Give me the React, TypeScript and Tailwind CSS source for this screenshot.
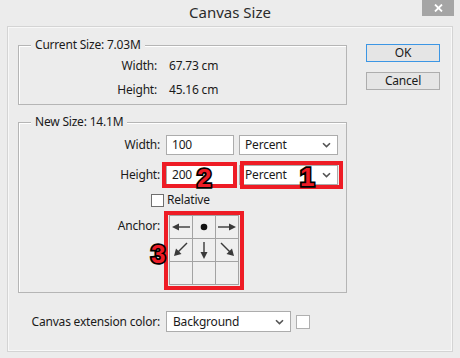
import React from 'react';

// Small chevron used by the dropdowns
function Chevron() {
    return (
        <svg width="9" height="6" viewBox="0 0 9 6" className="shrink-0">
            <path d="M1 1.2 L4.5 4.6 L8 1.2" fill="none" stroke="#555" strokeWidth="1.6" />
        </svg>
    );
}

function Select({ value, width }: { value: string; width: string }) {
    return (
        <div className={`${width} h-[20px] bg-white border border-[#acacac] flex items-center justify-between pl-[5px] pr-[6px]`}>
            <span>{value}</span>
            <Chevron />
        </div>
    );
}

// Big red number used as an annotation over the dialog
function Marker({ n, className }: { n: string; className: string }) {
    return (
        <span
            className={`absolute pointer-events-none text-[26px] leading-none font-black tracking-normal text-[#ee1c25] [-webkit-text-stroke:3.5px_#000] [paint-order:stroke_fill] ${className}`}
            style={{ fontFamily: '"Liberation Sans", Arial, sans-serif' }}
        >
            {n}
        </span>
    );
}

// Anchor arrows, one per cell (null = empty)
const arrows: (React.ReactNode | null)[] = [
    <g key="l">
        <line x1="8" y1="11" x2="20" y2="11" stroke="#3a3a3a" strokeWidth="1.4" />
        <path d="M2 11 L9 7.5 L9 14.5 Z" fill="#3a3a3a" />
    </g>,
    <circle key="c" cx="11" cy="11" r="3.3" fill="#111" />,
    <g key="r">
        <line x1="2" y1="11" x2="14" y2="11" stroke="#3a3a3a" strokeWidth="1.4" />
        <path d="M20 11 L13 7.5 L13 14.5 Z" fill="#3a3a3a" />
    </g>,
    <g key="dl">
        <line x1="17" y1="4" x2="8" y2="13" stroke="#3a3a3a" strokeWidth="1.4" />
        <path d="M4 17 L6 9.5 L11.5 15 Z" fill="#3a3a3a" />
    </g>,
    <g key="d">
        <line x1="11" y1="3" x2="11" y2="14" stroke="#3a3a3a" strokeWidth="1.4" />
        <path d="M11 20 L7.5 13 L14.5 13 Z" fill="#3a3a3a" />
    </g>,
    <g key="dr">
        <line x1="5" y1="4" x2="14" y2="13" stroke="#3a3a3a" strokeWidth="1.4" />
        <path d="M18 17 L16 9.5 L10.5 15 Z" fill="#3a3a3a" />
    </g>,
    null,
    null,
    null
];

export default function App() {
    return (
        <div
            className="w-[460px] h-[358px] bg-[#ececec] text-[12px] leading-[16px] tracking-[-0.2px] text-[#1a1a1a] overflow-hidden"
            style={{ fontFamily: '"Segoe UI", "Noto Sans", sans-serif' }}
        >
            {/* Title bar */}
            <div className="relative h-[26px] flex items-center justify-center">
                <span className="text-[15px] tracking-normal text-[#2b2b2b] -mt-[2px]">Canvas Size</span>
                <div className="absolute top-0 right-[6px] w-[32px] h-[16px] bg-[#a5a5a5] flex items-center justify-center">
                    <svg width="9" height="8" viewBox="0 0 9 8">
                        <path d="M1 0.5 L8 7.5 M8 0.5 L1 7.5" stroke="#fff" strokeWidth="1.8" />
                    </svg>
                </div>
            </div>

            {/* Main panel */}
            <div className="mx-[7px] h-[326px] border border-[#d4d4d4] shadow-[inset_0_0_0_1px_#f8f8f8] pl-[10px] pt-[18px]">
                <div className="flex">
                    <div className="w-[329px]">
                        {/* Current size */}
                        <div className="relative border border-[#b5b5b5] shadow-[inset_1px_1px_0_#fff] pt-[10px] pb-[4px]">
                            <span className="absolute -top-[9px] left-[12px] bg-[#ececec] px-[4px]">Current Size: 7.03M</span>
                            <div className="flex items-center h-[20px]">
                                <span className="w-[138px] text-right">Width:</span>
                                <span className="ml-[12px]">67.73 cm</span>
                            </div>
                            <div className="flex items-center h-[20px] mt-[4px]">
                                <span className="w-[138px] text-right">Height:</span>
                                <span className="ml-[12px]">45.16 cm</span>
                            </div>
                        </div>

                        {/* New size */}
                        <div className="relative mt-[17px] border border-[#b5b5b5] shadow-[inset_1px_1px_0_#fff] pt-[12px] pb-[7px]">
                            <span className="absolute -top-[9px] left-[12px] bg-[#ececec] px-[4px]">New Size: 14.1M</span>
                            <div className="flex items-center h-[20px]">
                                <span className="w-[141px] text-right">Width:</span>
                                <div className="ml-[6px] w-[68px] h-[20px] bg-white border border-[#acacac] flex items-center pl-[5px]">100</div>
                                <div className="ml-[5px]">
                                    <Select value="Percent" width="w-[99px]" />
                                </div>
                            </div>
                            <div className="flex items-center h-[20px] mt-[10px]">
                                <span className="w-[141px] text-right">Height:</span>
                                <div className="relative ml-[6px] w-[68px] h-[20px] bg-white border border-[#acacac] flex items-center pl-[5px]">
                                    200
                                    <span className="absolute -left-[5px] -right-[4px] -top-[4px] -bottom-[4px] border-[4px] border-[#ee1c25] pointer-events-none" />
                                    <Marker n="2" className="left-[30px] -top-[1px]" />
                                </div>
                                <div className="relative ml-[5px]">
                                    <Select value="Percent" width="w-[99px]" />
                                    <span className="absolute left-[1px] -right-[5px] -top-[4px] -bottom-[4px] border-[4px] border-[#ee1c25] pointer-events-none" />
                                    <Marker n="1" className="left-[61px] -top-[1px]" />
                                </div>
                            </div>
                            <div className="flex items-center h-[14px] mt-[8px] pl-[132px]">
                                <div className="w-[13px] h-[13px] bg-white border border-[#6f6f6f]" />
                                <span className="ml-[3px]">Relative</span>
                            </div>
                            <div className="flex items-start mt-[8px]">
                                <span className="w-[141px] text-right mt-[3px]">Anchor:</span>
                                <div className="relative ml-[9px]">
                                    <div className="grid grid-cols-3 gap-px bg-[#a3a3a3] border border-[#a3a3a3]">
                                        {arrows.map((a, i) => (
                                            <div key={i} className="w-[22px] h-[22px] bg-[#efefef]">
                                                {a && (
                                                    <svg width="22" height="22" viewBox="0 0 22 22">
                                                        {a}
                                                    </svg>
                                                )}
                                            </div>
                                        ))}
                                    </div>
                                    <span className="absolute -left-[5px] -right-[5px] -top-[4px] -bottom-[5px] border-[4px] border-[#ee1c25] pointer-events-none" />
                                    <Marker n="3" className="-left-[18px] top-[26px]" />
                                </div>
                            </div>
                        </div>
                    </div>

                    {/* Buttons */}
                    <div className="ml-[19px] -mt-[1px] flex flex-col">
                        <button className="w-[74px] h-[18px] border border-[#3c96e4] bg-[#e5e5e5] flex items-center justify-center leading-none">OK</button>
                        <button className="mt-[10px] w-[74px] h-[18px] border border-[#adadad] bg-[#e5e5e5] flex items-center justify-center leading-none">Cancel</button>
                    </div>
                </div>

                {/* Extension color */}
                <div className="flex items-center mt-[18px] w-[329px]">
                    <span className="w-[142px] text-right">Canvas extension color:</span>
                    <div className="ml-[6px]">
                        <div className="w-[125px] h-[21px] bg-white border border-[#acacac] flex items-center justify-between pl-[6px] pr-[6px]">
                            <span>Background</span>
                            <Chevron />
                        </div>
                    </div>
                    <div className="ml-[5px] w-[14px] h-[14px] bg-white border border-[#b0b0b0]" />
                </div>
            </div>
        </div>
    );
}
